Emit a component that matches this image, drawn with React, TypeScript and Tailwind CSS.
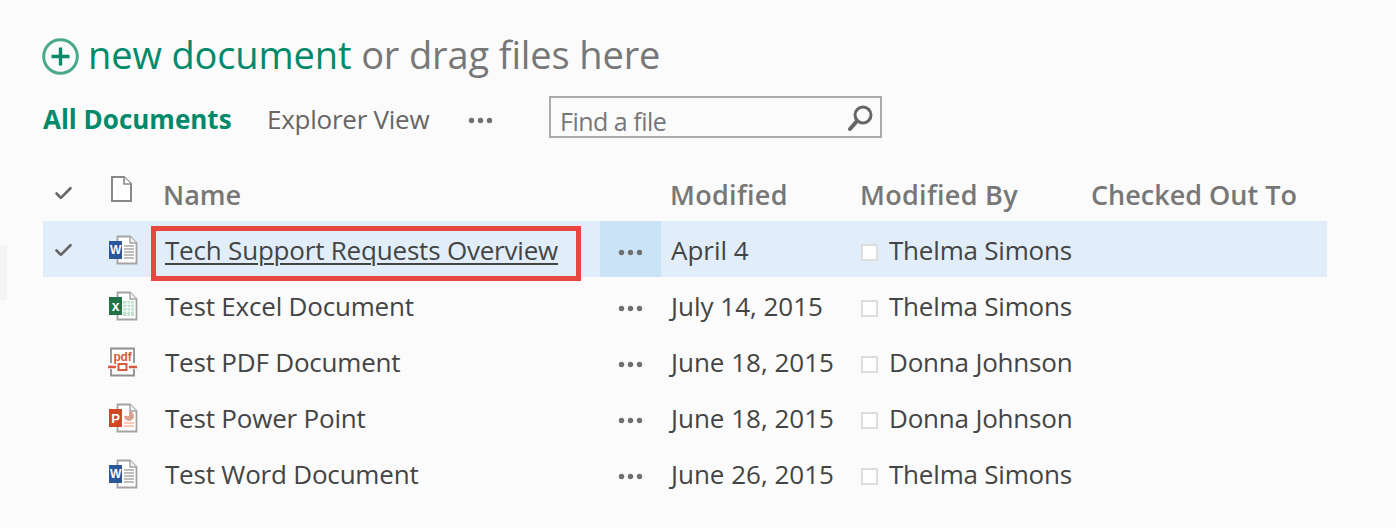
import { Check } from "lucide-react";

const font = "font-['Open_Sans','Noto_Sans',sans-serif]";
const rowGrid = "grid grid-cols-[57px_65px_435px_61px_200px_230px_1fr] h-14 items-center";

const WordIcon = () => (
  <svg width="30" height="30" viewBox="0 0 30 30">
    <path d="M9.5 1.5H22L28.5 8V28.5H9.5Z" fill="#fff" stroke="#a3a3a3" strokeWidth="1.8" />
    <path d="M22 1.5V8H28.5" fill="#f2f2f2" stroke="#a3a3a3" strokeWidth="1.4" />
    <path d="M16 11H26M16 14H26M16 17H26M16 20H26M16 23H26" stroke="#a8a8a8" strokeWidth="1.4" />
    <rect x="1" y="6" width="13" height="18" fill="#2b579a" />
    <text x="7.5" y="19" textAnchor="middle" fontSize="12" fontWeight="700" fill="#fff" fontFamily="Liberation Sans">W</text>
  </svg>
);

const ExcelIcon = () => (
  <svg width="30" height="30" viewBox="0 0 30 30">
    <path d="M9.5 1.5H22L28.5 8V28.5H9.5Z" fill="#fff" stroke="#a3a3a3" strokeWidth="1.8" />
    <path d="M22 1.5V8H28.5" fill="#f2f2f2" stroke="#a3a3a3" strokeWidth="1.4" />
    <path d="M15 10H26V25H15Z" fill="#bfe0cb" />
    <path d="M15 13H26M15 16.5H26M15 20H26M19 10V25M22.5 10V25" stroke="#fff" strokeWidth="1" />
    <rect x="1" y="6" width="13" height="18" fill="#217346" />
    <text x="7.5" y="19.5" textAnchor="middle" fontSize="14" fontWeight="700" fill="#fff" fontFamily="Liberation Sans">x</text>
  </svg>
);

const PdfIcon = () => (
  <svg width="30" height="30" viewBox="0 0 30 30">
    <path d="M3 16V1.500H26V16" fill="#fff" stroke="#8f8f8f" strokeWidth="1.800" />
    <path d="M3 22V28.500H26V22" fill="none" stroke="#8f8f8f" strokeWidth="1.800" />
    <text x="14.500" y="14" textAnchor="middle" fontSize="12" fontWeight="700" fill="#d9583b" fontFamily="Liberation Sans">pdf</text>
    <path d="M0 20H8M21 20H29" stroke="#d9583b" strokeWidth="2.400" />
    <rect x="10.500" y="17" width="8" height="6" fill="#fff" stroke="#d9583b" strokeWidth="2" />
  </svg>
);

const PptIcon = () => (
  <svg width="30" height="30" viewBox="0 0 30 30">
    <path d="M9.500 1.500H22L28.500 8V28.500H9.500Z" fill="#fff" stroke="#a3a3a3" strokeWidth="1.800" />
    <path d="M22 1.500V8H28.500" fill="#f2f2f2" stroke="#a3a3a3" strokeWidth="1.400" />
    <path d="M16 13A5 5 0 1 0 21 8V13Z" fill="#d9a48f" />
    <path d="M16 20H26M16 23H26" stroke="#f4b69c" strokeWidth="1.400" />
    <rect x="1" y="6" width="13" height="18" fill="#d24726" />
    <text x="7.500" y="19.500" textAnchor="middle" fontSize="13" fontWeight="700" fill="#fff" fontFamily="Liberation Sans">P</text>
  </svg>
);

const Dots = () => (
  <svg width="25" height="7" viewBox="0 0 25 7" fill="#707070" className="mt-[7px]">
    <circle cx="3.500" cy="3.500" r="2.700" />
    <circle cx="12.500" cy="3.500" r="2.700" />
    <circle cx="21.500" cy="3.500" r="2.700" />
  </svg>
);

const rows = [
  { name: "Tech Support Requests Overview", date: "April 4", by: "Thelma Simons", icon: <WordIcon /> },
  { name: "Test Excel Document", date: "July 14, 2015", by: "Thelma Simons", icon: <ExcelIcon /> },
  { name: "Test PDF Document", date: "June 18, 2015", by: "Donna Johnson", icon: <PdfIcon /> },
  { name: "Test Power Point", date: "June 18, 2015", by: "Donna Johnson", icon: <PptIcon /> },
  { name: "Test Word Document", date: "June 26, 2015", by: "Thelma Simons", icon: <WordIcon /> },
];

export default function App() {
  return (
    <div className={`${font} relative h-[528px] w-[1396px] overflow-hidden bg-[#fbfbfb] pl-[43px] pt-[30px] pr-[69px]`}>
      <div className="absolute left-0 top-[245px] h-[55px] w-[7px] bg-[#f4f4f4]" />

      <div className="flex h-[50px] items-center gap-[9px] text-[38px] tracking-[-0.13px] text-[#777]">
        <svg width="37" height="37" viewBox="0 0 37 37" fill="none" className="mt-[3px] -ml-[1px]">
          <circle cx="18.500" cy="18.500" r="16.800" stroke="#4aa98c" strokeWidth="3" />
          <path d="M18.500 9.500V27.500M9.500 18.500H27.500" stroke="#0a8a6a" strokeWidth="3.400" />
        </svg>
        <div className="pb-[2px]">
          <span className="text-[#008a6a]">new document</span> or drag files here
        </div>
      </div>

      <div className="mt-[15px] flex h-[44px] items-center text-[26px] tracking-[-0.25px]">
        <span className="w-[224px] pt-[4px] text-[26px] font-bold tracking-normal text-[#008a6a]">All Documents</span>
        <span className="w-[201px] pt-[4px] text-[#666]">Explorer View</span>
        <Dots />
        <div className="ml-[56px] flex h-[42px] w-[333px] items-center justify-between border-2 border-[#ababab] pl-[10px] pr-[6px] text-[25px] tracking-[-0.5px] text-[#777]">
          <span className="-ml-[1px] pt-[10px]">Find a file</span>
          <svg width="26" height="28" viewBox="0 0 26 28" fill="none" className="mt-[1px]">
            <circle cx="15" cy="11" r="8" stroke="#666" strokeWidth="3" />
            <path d="M9 17L2 25" stroke="#666" strokeWidth="4" strokeLinecap="round" />
          </svg>
        </div>
      </div>

      <div className={`${rowGrid} mt-[26px] text-[27px] font-semibold text-[#777]`}>
        <Check size={21} strokeWidth={3} className="ml-[10px] text-[#666]" />
        <svg width="26" height="28" viewBox="0 0 26 28" fill="#fff" className="-mt-[8px] ml-[8px]">
          <path d="M4 2H16L23 9V26H4Z" stroke="#888" strokeWidth="2" />
          <path d="M16 2V9H23" stroke="#888" strokeWidth="1.600" />
        </svg>
        <span className="-ml-[2px] pt-[4px]">Name</span>
        <span />
        <span className="pl-[9px] pt-[4px] tracking-[0.3px]">Modified</span>
        <span className="-ml-[1px] pt-[4px] tracking-[0.3px]">Modified By</span>
        <span className="pt-[4px]">Checked Out To</span>
      </div>

      {rows.map((row, i) => (
        <div key={row.name} className={`${rowGrid} text-[26px] tracking-[-0.2px] text-[#444] ${i === 0 ? "bg-[#e1eef9]" : ""}`}>
          <div className="pt-[2px]">{i === 0 && <Check size={21} strokeWidth={3} className="ml-[10px] text-[#666]" />}</div>
          <div className="ml-[8px] pt-[2px]">{row.icon}</div>
          <span className={`pt-[2px] ${i === 0 ? "underline decoration-2 underline-offset-[3px]" : ""}`}>{row.name}</span>
          <div className={`flex h-14 items-center justify-center ${i === 0 ? "bg-[#cbe3f6]" : ""}`}>
            <Dots />
          </div>
          <span className="pl-[10px] pt-[2px] tracking-normal">{row.date}</span>
          <div className="flex items-center gap-[11px] pt-[2px]">
            <div className="mt-[5px] h-[17px] w-[17px] border-2 border-[#ddd] bg-white" />
            <span>{row.by}</span>
          </div>
          <span />
        </div>
      ))}

      <div className="absolute left-[151px] top-[226px] h-[55px] w-[430px] border-[5px] border-[#e8473f]" />
    </div>
  );
}
